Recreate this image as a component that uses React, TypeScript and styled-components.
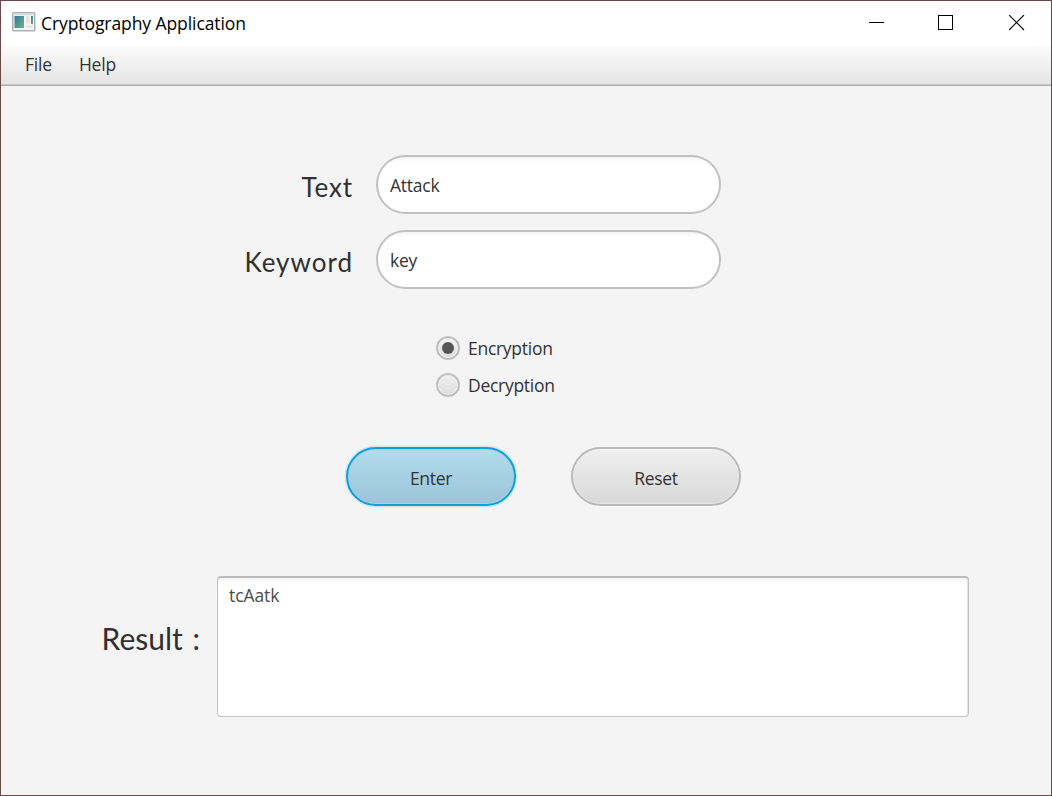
import React, { useState } from "react";
import styled, { createGlobalStyle, css } from "styled-components";

const Global = createGlobalStyle`
  *, *::before, *::after { box-sizing: border-box; }
  body { margin: 0; background: #f4f4f4; }
  button, input, textarea { font: inherit; color: inherit; margin: 0; }
`;

const Window = styled.div`
  width: 1052px;
  height: 796px;
  border: 1px solid #6b474b;
  background: #f4f4f4;
  display: flex;
  flex-direction: column;
  overflow: hidden;
  font-family: "Open Sans", "Noto Sans", sans-serif;
  font-size: 17.5px;
  letter-spacing: -0.25px;
  line-height: 24px;
  color: #333;
`;

const TitleBar = styled.header`
  height: 45px;
  flex: none;
  display: flex;
  align-items: center;
  background: #fff;
  padding-left: 11px;
  color: #000;
`;

const Title = styled.span`
  flex: 1;
  margin-left: 5px;
  padding-bottom: 2px;
  letter-spacing: -0.08px;
`;

const AppIcon = styled.svg`
  display: block;
  margin-top: -4px;
`;

const WindowControl = styled.button<{ $nudge?: boolean }>`
  width: 70px;
  height: 45px;
  padding: 0 0 2px ${(p) => (p.$nudge ? 2 : 0)}px;
  border: 0;
  background: none;
  display: flex;
  align-items: center;
  justify-content: center;
  svg { display: block; }
`;

const MenuBar = styled.nav`
  height: 40px;
  flex: none;
  display: flex;
  align-items: center;
  gap: 27px;
  padding-left: 24px;
  background: linear-gradient(#fbfbfb, #e4e4e4);
  border-bottom: 1px solid #b0b0b0;
  box-shadow: inset 0 -1px #c8c8c8;
`;

const MenuItem = styled.span`
  height: 28px;
  letter-spacing: -0.2px;
`;

const Content = styled.main`
  flex: 1;
  padding-top: 69px;
`;

const Form = styled.form`
  display: flex;
  flex-direction: column;
`;

const FieldRow = styled.label`
  display: grid;
  grid-template-columns: 352px 345px;
  column-gap: 23px;
  align-items: center;
  margin-bottom: 16px;
`;

const Caption = styled.span<{ $size: number; $spacing: number }>`
  font-family: Lato, sans-serif;
  font-size: ${(p) => p.$size}px;
  letter-spacing: ${(p) => p.$spacing}px;
  line-height: 40px;
  color: #303030;
  text-align: right;
  white-space: nowrap;
`;

const FieldCaption = styled(Caption)`
  padding-top: 4px;
`;

const TextInput = styled.input`
  height: 59px;
  width: 100%;
  padding: 0 12px;
  border: 2px solid #c1c1c1;
  border-radius: 30px;
  background: linear-gradient(#f3f3f3, #fff 5px);
  letter-spacing: -0.25px;
  outline: none;
`;

const Modes = styled.div`
  display: flex;
  flex-direction: column;
  gap: 13px;
  margin: 31px 0 0 435px;
`;

const Mode = styled.label`
  display: flex;
  align-items: center;
  height: 24px;
  gap: 8px;
  letter-spacing: -0.28px;
`;

const Radio = styled.input`
  appearance: none;
  width: 24px;
  height: 24px;
  border: 2px solid #c0c0c0;
  border-radius: 50%;
  background: linear-gradient(#f0f0f0, #dedede);
  box-shadow: inset 0 0 0 1px #f3f3f3;
  display: grid;
  place-items: center;
  &:checked::after {
    content: "";
    width: 12px;
    height: 12px;
    border-radius: 50%;
    background: #555;
  }
`;

const Actions = styled.div`
  display: flex;
  gap: 55px;
  margin: 50px 0 0 345px;
`;

const PillButton = styled.button<{ $focused?: boolean }>`
  width: 170px;
  height: 59px;
  padding: 2px 0 0;
  border-radius: 30px;
  letter-spacing: -0.3px;
  ${(p) =>
    p.$focused
      ? css`
          border: 2px solid #0c9fd8;
          background: linear-gradient(#b3dcee, #9cc3d8);
          box-shadow: 0 0 0 1.5px #cfe8f1, inset 0 0 0 1px #a6d0e3;
        `
      : css`
          border: 2px solid #b9b9b9;
          background: linear-gradient(#efefef, #d8d8d8);
          box-shadow: inset 0 1px 0 0 #fafafa, inset 0 0 0 1px #e9e9e9, 0 1px #f9f9f9;
        `}
`;

const ResultRow = styled.div`
  display: flex;
  align-items: center;
  margin-top: 70px;
`;

const ResultCaption = styled(Caption)`
  width: 199px;
  margin-right: 17px;
  padding-bottom: 17px;
  word-spacing: 2px;
`;

const ResultArea = styled.textarea`
  width: 752px;
  height: 141px;
  display: block;
  padding: 5px 11px;
  resize: none;
  outline: none;
  border: 1px solid #c4c4c4;
  border-top: 2px solid #bcbcbc;
  border-radius: 4px;
  background: linear-gradient(#f2f2f2, #fff 5px);
  box-shadow: inset -1px 0 #e0e0e0;
  color: #4b4b4b;
  letter-spacing: -0.1px;
`;

export default function App() {
  const [mode, setMode] = useState("Encryption");
  return (
    <>
      <Global />
      <Window>
        <TitleBar>
          <AppIcon width="24" height="20" viewBox="0 0 24 20">
            <defs>
              <linearGradient id="screen" x1="0" y1="0" x2="1" y2="1">
                <stop offset="0" stopColor="#3975a5" />
                <stop offset="1" stopColor="#67b77c" />
              </linearGradient>
            </defs>
            <rect x="0.75" y="0.75" width="22" height="18" rx="1" fill="#f4f4f4" stroke="#adb2b6" strokeWidth="1.5" />
            <rect x="2" y="2" width="19.5" height="1.5" fill="#dce2e6" />
            <rect x="2.5" y="4" width="9.5" height="12" fill="url(#screen)" />
            <rect x="14" y="4" width="3.5" height="7.5" fill="#e4e4e4" />
            <rect x="14" y="13" width="7" height="3" fill="#e9e9e9" />
            <rect x="19" y="4" width="2" height="8" fill="url(#screen)" />
          </AppIcon>
          <Title>Cryptography Application</Title>
          <WindowControl $nudge aria-label="Minimize">
            <svg width="16" height="16" viewBox="0 0 16 16" shapeRendering="crispEdges">
              <path d="M0 7.5h15" stroke="#000" />
            </svg>
          </WindowControl>
          <WindowControl aria-label="Maximize">
            <svg width="16" height="16" viewBox="0 0 16 16" shapeRendering="crispEdges">
              <path d="M.5.5h14v14H.5z" fill="none" stroke="#000" />
            </svg>
          </WindowControl>
          <WindowControl $nudge aria-label="Close">
            <svg width="16" height="16" viewBox="0 0 16 16">
              <path d="M0 0l15 15M15 0L0 15" stroke="#000" strokeWidth="1.1" />
            </svg>
          </WindowControl>
        </TitleBar>
        <MenuBar>
          <MenuItem>File</MenuItem>
          <MenuItem>Help</MenuItem>
        </MenuBar>
        <Content>
          <Form onSubmit={(e) => e.preventDefault()}>
            <FieldRow>
              <FieldCaption $size={26} $spacing={0.9}>Text</FieldCaption>
              <TextInput defaultValue="Attack" />
            </FieldRow>
            <FieldRow>
              <FieldCaption $size={26} $spacing={1}>Keyword</FieldCaption>
              <TextInput defaultValue="key" />
            </FieldRow>
            <Modes>
              {["Encryption", "Decryption"].map((name) => (
                <Mode key={name}>
                  <Radio type="radio" name="mode" checked={mode === name} onChange={() => setMode(name)} />
                  {name}
                </Mode>
              ))}
            </Modes>
            <Actions>
              <PillButton $focused type="submit">Enter</PillButton>
              <PillButton type="reset">Reset</PillButton>
            </Actions>
            <ResultRow>
              <ResultCaption $size={30} $spacing={0}>Result :</ResultCaption>
              <ResultArea defaultValue="tcAatk" />
            </ResultRow>
          </Form>
        </Content>
      </Window>
    </>
  );
}
